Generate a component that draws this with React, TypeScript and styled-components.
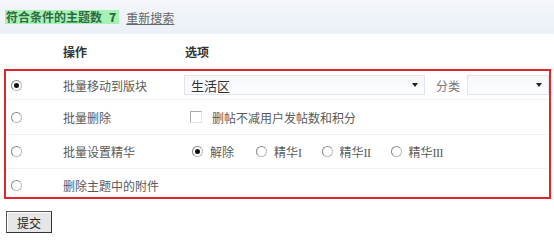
import styled, { createGlobalStyle } from 'styled-components'

const Global = createGlobalStyle`
  body {
    margin: 0;
    background: #fff;
    font-family: "Noto Sans CJK SC", "DejaVu Sans", sans-serif;
    font-size: 12px;
    color: #5a5a5a;
  }
`

const Page = styled.div`
  width: 554px;
  height: 240px;
  overflow: hidden;
`

const TopBar = styled.div`
  height: 34px;
  background: linear-gradient(#f4f7fb, #eaf0f7);
  display: flex;
  align-items: center;
  padding-left: 5px;
  gap: 7px;
`

const Count = styled.span`
  background: #a6f2b4;
  color: #2f6a45;
  font-weight: bold;
  padding: 0 3px 0 1px;
  line-height: 14px;

  & b {
    margin-left: 7px;
  }
`

const Research = styled.a`
  color: #666;
  text-decoration: underline;
  cursor: pointer;
`

const Head = styled.div`
  display: flex;
  height: 35px;
  align-items: center;
  color: #333;
  font-weight: bold;
  padding-left: 63px;

  & span:first-child {
    width: 122px;
  }
`

const Box = styled.div`
  margin: 0 3px 0 4px;
  border: 2px solid #e0262c;
  height: 130px;
  box-sizing: border-box;
  display: flex;
  flex-direction: column;
`

const Row = styled.div<{ $h: number }>`
  display: flex;
  align-items: center;
  box-sizing: border-box;
  height: ${(p) => p.$h}px;
  flex-shrink: 0;
  border-bottom: 1px solid #f2f2f2;

  &:last-child {
    border-bottom: none;
    padding-top: 4px;
  }
`

const RadioCell = styled.div`
  width: 57px;
  box-sizing: border-box;
  padding-left: 5px;
  display: flex;
`

const Label = styled.div`
  width: 121px;
  flex-shrink: 0;
`

const Options = styled.div`
  display: flex;
  align-items: center;
  flex: 1;
  white-space: nowrap;
`

const Radio = styled.span<{ $on?: boolean }>`
  display: inline-block;
  flex-shrink: 0;
  width: 9px;
  height: 9px;
  border-radius: 50%;
  border: 1px solid #bbb;
  border-left-color: #888;
  border-top-color: #888;
  background: #fff;
  position: relative;

  &::after {
    content: '';
    display: ${(p) => (p.$on ? 'block' : 'none')};
    position: absolute;
    left: 2px;
    top: 2px;
    width: 5px;
    height: 5px;
    border-radius: 50%;
    background: #111;
  }
`

const Select = styled.div<{ $w: number }>`
  width: ${(p) => p.$w}px;
  flex-shrink: 0;
  height: 20px;
  box-sizing: border-box;
  border: 1px solid #e1e4ee;
  background: linear-gradient(#f6f8fc, #fbfcfe);
  display: flex;
  align-items: center;
  justify-content: space-between;
  padding: 0 6px 0 6px;
  color: #333;
  font-size: 13px;

  &::after {
    content: '';
    margin-left: auto;
    border-left: 3px solid transparent;
    border-right: 3px solid transparent;
    border-top: 4px solid #222;
  }
`

const Sort = styled.span`
  margin: 0 7px 0 11px;
  color: #777;
`

const Check = styled.span`
  display: inline-block;
  width: 10px;
  height: 10px;
  border: 1px solid #aaa;
  border-right-color: #e4e4e4;
  border-bottom-color: #e4e4e4;
  margin: 0 10px 0 6px;
`

const Choice = styled.label`
  display: flex;
  align-items: center;
  gap: 7px;
  margin-right: 20px;

  &:first-child {
    margin-left: 8px;
    margin-right: 22px;
  }
`

const Roman = styled.span`
  font-family: "Liberation Serif", serif;
  font-size: 12px;
  letter-spacing: -0.5px;
`

const levels = ['I', 'II', 'III']

export default function App() {
  return (
    <Page>
      <Global />
      <TopBar>
        <Count>
          符合条件的主题数<b>7</b>
        </Count>
        <Research>重新搜索</Research>
      </TopBar>
      <Head>
        <span>操作</span>
        <span>选项</span>
      </Head>
      <Box>
        <Row $h={29}>
          <RadioCell><Radio $on /></RadioCell>
          <Label>批量移动到版块</Label>
          <Options>
            <Select $w={241}>生活区</Select>
            <Sort>分类</Sort>
            <Select $w={82} />
          </Options>
        </Row>
        <Row $h={35}>
          <RadioCell><Radio /></RadioCell>
          <Label>批量删除</Label>
          <Options>
            <Check />
            删帖不减用户发帖数和积分
          </Options>
        </Row>
        <Row $h={34}>
          <RadioCell><Radio /></RadioCell>
          <Label>批量设置精华</Label>
          <Options>
            <Choice><Radio $on /><span>解除</span></Choice>
            {levels.map((l) => (
              <Choice key={l}>
                <Radio />
                <span>精华<Roman>{l}</Roman></span>
              </Choice>
            ))}
          </Options>
        </Row>
        <Row $h={28}>
          <RadioCell><Radio /></RadioCell>
          <Label>删除主题中的附件</Label>
        </Row>
      </Box>
      <Submit>提交</Submit>
    </Page>
  )
}

const Submit = styled.button`
  display: block;
  margin: 12px 0 0 6px;
  width: 46px;
  height: 22px;
  font-family: inherit;
  font-size: 12px;
  color: #222;
  background: #e6e6e6;
  border: 1px solid #555;
  border-right-color: #333;
  border-bottom-color: #333;
  box-shadow: inset 1px 1px 0 #fff;
  padding: 0;
`
